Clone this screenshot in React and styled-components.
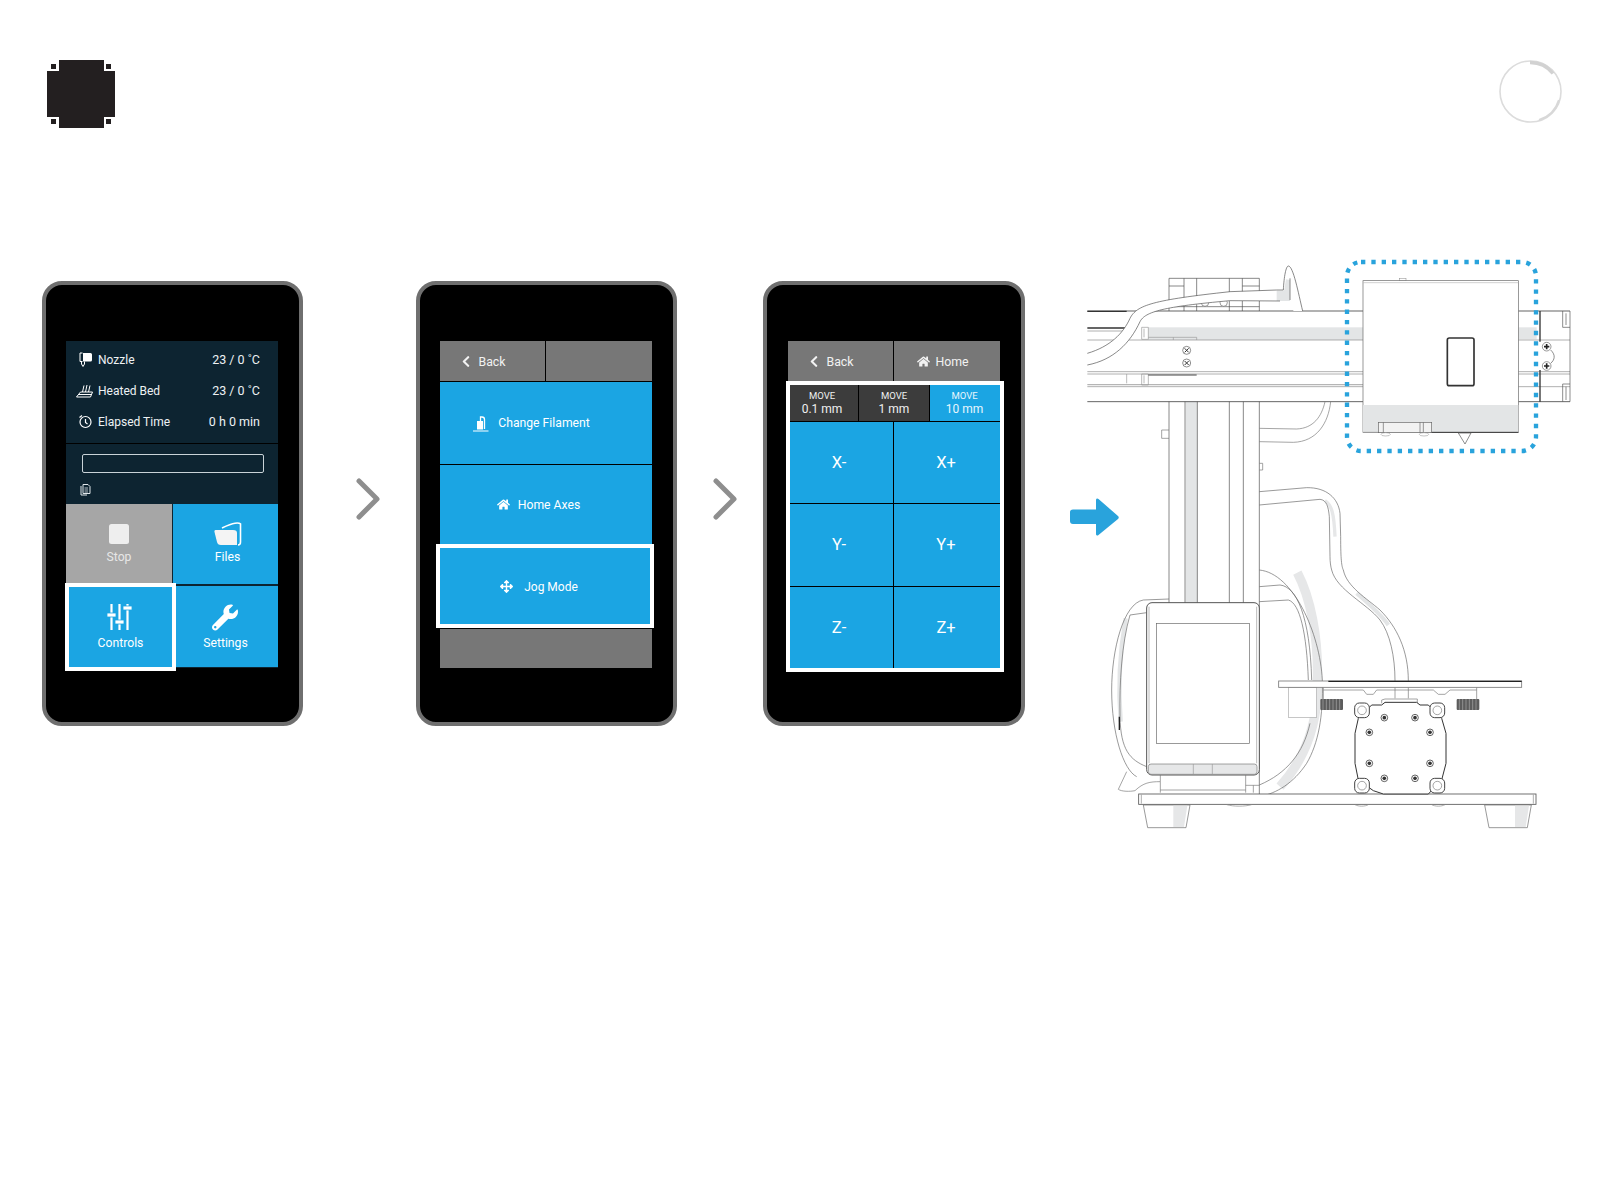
import styled, { createGlobalStyle } from "styled-components";
import { FaArrowsAlt, FaChevronLeft, FaHome, FaWrench } from "react-icons/fa";

const GlobalStyle = createGlobalStyle`
  body {
    margin: 0;
    background: #fff;
    font-family: Roboto, "Liberation Sans", sans-serif;
  }
`;

const Page = styled.div`
  width: 1616px;
  min-height: 1191px;
  box-sizing: border-box;
  padding: 60px 54px 0 42px;
`;

const TopBar = styled.header`
  display: flex;
  justify-content: space-between;
  align-items: flex-start;
  height: 69px;
  padding-left: 5px;
`;

const Stage = styled.main`
  display: flex;
  align-items: flex-start;
  margin-top: 121px;
`;

const Phone = styled.div`
  flex: none;
  width: ${(p) => p.$w ?? 261}px;
  height: 445px;
  margin-top: 31px;
  box-sizing: border-box;
  padding: 56px 0 0 ${(p) => p.$inset ?? 20}px;
  background: #000;
  border: 4px solid #6f6f6f;
  border-radius: 20px;
`;

const Screen = styled.div`
  display: flex;
  flex-direction: column;
  width: 212px;
  height: 327px;
  color: #fff;
`;

const Chevron = styled.svg`
  flex: none;
  width: 24px;
  height: 42px;
  margin: 228px ${(p) => p.$after}px 0 ${(p) => p.$before}px;
`;

const Arrow = styled.svg`
  flex: none;
  width: 49px;
  height: 38px;
  margin: 248px -39px 0 45px;
`;

const Drawing = styled.svg`
  flex: none;
  width: 500px;
  height: 590px;
`;

/* status screen */
const InfoPanel = styled.div`
  height: 102px;
  box-sizing: border-box;
  padding: 3px 18px 0 12px;
  background: #0d2431;
`;

const InfoRow = styled.div`
  display: flex;
  align-items: center;
  height: 31px;
  font-size: 12px;
  color: #eef2f4;
`;

const InfoIcon = styled.svg`
  flex: none;
  width: ${(p) => p.$w ?? 15}px;
  height: 15px;
  margin-left: ${(p) => p.$left ?? 0}px;
  margin-right: ${(p) => p.$gap ?? 4}px;
`;

const InfoValue = styled.span`
  margin-left: auto;
  font-size: 12.5px;
`;

const ProgressPanel = styled.div`
  height: 60px;
  margin-top: 1px;
  box-sizing: border-box;
  padding: 10px 14px 0 16px;
  background: #0d2431;
`;

const ProgressBar = styled.div`
  height: 19px;
  box-sizing: border-box;
  border: 1px solid #c9d3d8;
  border-radius: 2px;
`;

const FileIcon = styled.svg`
  display: block;
  width: 11px;
  height: 13px;
  margin: 10px 0 0 -2px;
`;

const TileGrid = styled.div`
  flex: 1;
  display: grid;
  grid-template-columns: 106px 105px;
  grid-template-rows: 80px 81px;
  column-gap: 1px;
  row-gap: 2px;
  background: #0d2431;
`;

const Tile = styled.div`
  display: flex;
  flex-direction: column;
  align-items: center;
  box-sizing: border-box;
  padding-top: ${(p) => p.$top}px;
  padding-left: ${(p) => p.$shift ?? 0}px;
  font-size: 12.2px;
  color: ${(p) => (p.$muted ? "#e6e6e6" : "#fff")};
  background: ${(p) => (p.$muted ? "#a6a6a6" : "#1ba5e3")};
`;

const SelectedTile = styled(Tile)`
  position: relative;
  margin: -3px -4px -4px -1px;
  border: 4px solid #fff;
`;

const TileIcon = styled.svg`
  display: block;
  width: ${(p) => p.$w}px;
  height: ${(p) => p.$h}px;
  margin-bottom: ${(p) => p.$gap}px;
  margin-right: ${(p) => p.$nudge ?? 0}px;
`;

const WrenchIcon = styled(FaWrench)`
  display: block;
  width: 26px;
  height: 27px;
  margin-bottom: 5px;
  margin-right: 1px;
`;

/* menu and jog screens */
const HeaderBar = styled.div`
  display: grid;
  grid-template-columns: 105px 106px;
  column-gap: 1px;
  height: 40px;
  flex: none;
`;

const HeaderCell = styled.div`
  display: flex;
  align-items: center;
  justify-content: center;
  gap: ${(p) => p.$gap ?? 8}px;
  padding: 1px ${(p) => p.$pad ?? 0}px 0 0;
  font-size: 12.3px;
  color: #f2f2f2;
  background: #777;
`;

const BackIcon = styled(FaChevronLeft)`
  width: 8px;
  height: 13px;
`;

const HomeIcon = styled(FaHome)`
  width: ${(p) => p.$size}px;
  height: ${(p) => p.$size}px;
`;

const MoveIcon = styled(FaArrowsAlt)`
  width: 13px;
  height: 13px;
  margin-right: 1px;
`;

const MenuButton = styled.div`
  display: flex;
  align-items: center;
  justify-content: center;
  gap: ${(p) => p.$gap ?? 8}px;
  flex: none;
  height: ${(p) => p.$h}px;
  margin-top: ${(p) => p.$top ?? 0}px;
  padding-right: ${(p) => p.$pad}px;
  font-size: 12.2px;
  background: #1ba5e3;
`;

const SelectedButton = styled(MenuButton)`
  box-sizing: border-box;
  height: 84px;
  margin: 0 -2px 0 -4px;
  padding: 1px 12px 0 0;
  gap: 10px;
  font-size: 12px;
  border: 4px solid #fff;
`;

const GrayFooter = styled.div`
  flex: 1;
  margin-top: 1px;
  background: #777;
`;

const JogPanel = styled.div`
  flex: none;
  margin: 0 -4px 0 -2px;
  height: 291px;
  box-sizing: border-box;
  padding: 4px;
  background: #fff;
`;

const JogInner = styled.div`
  display: flex;
  flex-direction: column;
  gap: 1px;
  height: 100%;
  background: #000;
`;

const StepRow = styled.div`
  display: grid;
  grid-template-columns: 68px 70px 70px;
  column-gap: 1px;
  flex: none;
  height: 36px;
`;

const StepCell = styled.div`
  display: flex;
  flex-direction: column;
  align-items: center;
  justify-content: center;
  padding: 0 ${(p) => p.$pad ?? 0}px 2px 0;
  font-size: 12px;
  line-height: 14px;
  color: ${(p) => (p.$active ? "#e8f6fd" : "#f0f0f0")};
  background: ${(p) => (p.$active ? "#1ba5e3" : "#3c3c3c")};

  small {
    font-size: 9.5px;
    line-height: 13px;
  }
`;

const AxisGrid = styled.div`
  flex: 1;
  display: grid;
  grid-template-columns: 103px 106px;
  grid-auto-rows: 1fr;
  gap: 1px;
`;

const AxisButton = styled.div`
  display: flex;
  align-items: center;
  justify-content: center;
  padding-right: 5px;
  font-size: 16.5px;
  background: #1ba5e3;

  &:nth-child(even) {
    padding-right: 2px;
  }
`;

/* pictures */
const Logo = () => (
  <svg width="68" height="68" viewBox="0 0 68 68">
    <path fill="#231f20" d="M12 0H57V11H68V57H57V68H12V57H0V11H12Z" />
    <path
      fill="#231f20"
      d="M4 4h5v5H4ZM59 4h5v5h-5ZM4 59h5v5H4ZM59 59h5v5h-5Z"
    />
  </svg>
);

const Ring = () => (
  <svg width="63" height="63" viewBox="0 0 63 63">
    <circle cx="31.5" cy="31.5" r="30.5" fill="none" stroke="#dcdcdc" strokeWidth="1.6" />
    <path d="M31 2.5A29 29 0 0 1 54 13.5" fill="none" stroke="#d2d2d2" strokeWidth="3.5" />
    <path d="M60 40A30 30 0 0 1 40 60" fill="none" stroke="#d8d8d8" strokeWidth="2.2" />
  </svg>
);

const NextChevron = ({ before, after }) => (
  <Chevron $before={before} $after={after} viewBox="0 0 24 42">
    <path d="M3 3L21 21L3 39" fill="none" stroke="#8e8e8e" strokeWidth="5" strokeLinecap="round" strokeLinejoin="round" />
  </Chevron>
);

const NozzleGlyph = () => (
  <InfoIcon viewBox="0 0 15 15" $gap={5}>
    <path d="M5 1h7.5A1.5 1.5 0 0 1 14 2.5v5.5A1.5 1.5 0 0 1 12.5 9.5H5Z" fill="#fff" />
    <path d="M4.5 1H2v8.5h2.5M3.5 9.5v2.5l1.5 2.5 1.5-2.5V9.5" fill="none" stroke="#fff" strokeWidth="1" />
  </InfoIcon>
);

const BedGlyph = () => (
  <InfoIcon viewBox="0 0 17 15" $w={17} $left={-2} $gap={5}>
    <path d="M4.5 9L0.5 14H14.5L16.5 9Z" fill="none" stroke="#fff" strokeWidth="1" />
    <path d="M6.5 9L8 2.5M9.5 9L11 2M12.5 9L14 2.5M3 11.5H15.5" fill="none" stroke="#fff" strokeWidth="1" />
  </InfoIcon>
);

const ClockGlyph = () => (
  <InfoIcon viewBox="0 0 15 15" $gap={5}>
    <circle cx="7.5" cy="8" r="5.5" fill="none" stroke="#fff" strokeWidth="1.2" />
    <path d="M7.5 5v3.5l2 1.5M1.5 3.5L4 1.5" fill="none" stroke="#fff" strokeWidth="1.2" />
  </InfoIcon>
);

const FilamentGlyph = () => (
  <svg width="16" height="17" viewBox="0 0 16 17">
    <path d="M4 6h6v8.5H4Z" fill="#fff" />
    <path d="M11.5 14V4.500a2.500 2.500 0 0 0-2.500-2.500H7.500V6" fill="none" stroke="#fff" strokeWidth="1.3" />
    <path d="M0 16H15.5" stroke="#fff" strokeWidth="1" />
  </svg>
);

const Ln = ({ d, w = 2, c = "#4d4d4d" }) => (
  <path d={d} fill="none" stroke={c} strokeWidth={w} />
);

const Screw = ({ x, y }) => (
  <g>
    <circle cx={x} cy={y} r="12" fill="#fff" stroke="#555" strokeWidth="2" />
    <path d={`M${x - 6} ${y - 6}L${x + 6} ${y + 6}M${x + 6} ${y - 6}L${x - 6} ${y + 6}`} stroke="#333" strokeWidth="3" />
  </g>
);

const MotorScrew = ({ x, y }) => (
  <g>
    <circle cx={x} cy={y} r="10" fill="#fff" stroke="#444" strokeWidth="2.5" />
    <circle cx={x} cy={y} r="5.5" fill="#333" />
  </g>
);

const Lug = ({ x, y }) => (
  <g>
    <rect x={x - 22} y={y - 22} width="44" height="44" rx="14" fill="#fff" stroke="#444" strokeWidth="3" />
    <circle cx={x} cy={y} r="13" fill="#fff" stroke="#777" strokeWidth="2" />
  </g>
);

const Knob = ({ x }) => (
  <g>
    <rect x={x} y="1347" width="68" height="33" rx="3" fill="#5c5c5c" />
    <path d={`M${x + 8} 1347v33M${x + 18} 1347v33M${x + 28} 1347v33M${x + 38} 1347v33M${x + 48} 1347v33M${x + 58} 1347v33`} stroke="#aaa" strokeWidth="2" />
  </g>
);

const Foot = ({ x, patch }) => (
  <g>
    <path d={`M${x} 1665H${x + 140}L${x + 128} 1733H${x + 13}Z`} fill="#fff" stroke="#666" strokeWidth="2" />
    <path d={`M${patch} 1667H${patch + 42}L${patch + 32} 1731H${patch}Z`} fill="#e6e7e8" />
  </g>
);

const PrinterDrawing = () => (
  <Drawing viewBox="0 0 1500 1770">
    {/* column */}
    <rect x="317" y="455" width="35" height="620" fill="#e3e5e6" />
    <Ln d="M267 455V1060M315 455V1060M352 455V1060M448 455V1060M490 455V1060M538 455V1640" />
    <Ln d="M267 540H245V565H267M538 640H548V660H538" c="#777" />

    {/* motor on top */}
    <Ln d="M267 183V85H538V183M312 85V183M350 85V183M448 85V183M487 85V183M487 108H538M267 108H312M267 170H538" />
    <circle cx="375" cy="158" r="11" fill="#fff" stroke="#666" strokeWidth="2" />
    <circle cx="431" cy="158" r="11" fill="#fff" stroke="#666" strokeWidth="2" />

    {/* x rail */}
    <rect x="205" y="232" width="644" height="38" fill="#e3e5e6" />
    <rect x="1315" y="232" width="55" height="36" fill="#e3e5e6" />
    <Ln d="M22 183H849M22 455H849M1315 183H1470M1315 455H1470" w="2.5" c="#444" />
    <Ln d="M22 184H140M22 234H135" w="4" c="#333" />
    <Ln d="M22 243H130M22 270H849M22 365H849M22 372H849M22 410H849M1315 270H1470M1315 365H1470M1315 372H1470M1315 410H1470" c="#8a8a8a" />
    <Ln d="M22 404H849" w="4" c="#b5b5b5" />
    <Ln d="M185 232H205V268H185ZM192 236V262M185 372H205V405H185ZM192 376V400M205 262H350V270M280 262V270M140 372V400" c="#999" />
    <Ln d="M205 375H350" w="3" c="#444" />
    <Screw x={320} y={301} />
    <Screw x={320} y={339} />

    {/* x rail end */}
    <Ln d="M1380 183V275M1380 360V455" w="4" c="#333" />
    <Ln d="M1448 183V232H1470M1448 402V455M1448 402H1470M1470 183V455M1458 190V225M1458 410V450" c="#555" />
    <Ln d="M1412 300C1428 315 1424 330 1412 340" c="#555" />
    <circle cx="1400" cy="290" r="13" fill="#fff" stroke="#666" strokeWidth="2" />
    <circle cx="1400" cy="348" r="13" fill="#fff" stroke="#666" strokeWidth="2" />
    <path d="M1392 290H1408M1400 282V298M1392 348H1408M1400 340V356" stroke="#222" strokeWidth="5" />

    {/* top cable */}
    <path d="M22 310C90 290 130 250 150 205C170 165 220 150 450 125L590 120L610 120C612 80 618 48 625 48C640 48 655 130 668 183H640V154L600 153H450C250 170 195 185 180 215C150 280 100 330 22 345Z" fill="#fff" />
    <path d="M590 122H612L618 88L630 90V153H590Z" fill="#e3e5e6" />
    <Ln d="M22 345C100 330 150 280 180 215C195 185 250 170 450 152L600 153" />
    <Ln d="M22 310C90 290 130 250 150 205C170 165 220 150 450 125L590 120H610C612 80 618 48 625 48C640 48 655 130 668 183M630 85V150" />

    {/* side cables */}
    <Ln d="M538 535L650 537C700 535 725 500 735 455M538 575L640 577C710 575 745 520 752 455" c="#777" />
    <Ln d="M735 752C755 765 762 790 765 860" w="10" c="#e6e7e8" />
    <Ln d="M830 1030C865 1060 900 1090 925 1125" w="12" c="#e3e5e6" />
    <Ln d="M538 725L680 713C740 712 775 745 780 790L782 860C782 930 785 950 790 960C800 1010 860 1045 900 1080C950 1130 985 1200 985 1293" c="#666" />
    <Ln d="M538 765L720 748C740 750 745 770 748 800L750 920C750 935 752 950 755 960C770 1020 860 1060 900 1110C930 1150 945 1220 945 1293" c="#666" />

    {/* big loop behind the screen */}
    <Ln d="M652 968C690 1040 716 1160 712 1290C715 1400 690 1510 600 1610" w="28" c="#e6e7e8" />
    <Ln d="M538 960C640 970 720 1150 727 1290C730 1400 715 1480 680 1540C640 1600 590 1630 538 1640" c="#666" />
    <Ln d="M538 1010L600 1005C650 1010 690 1100 695 1290M538 1055L625 1050C660 1060 680 1150 685 1290M690 1420C670 1510 620 1570 538 1605" c="#666" />
    <Ln d="M137 1105C120 1200 113 1300 122 1415" w="13" c="#e3e5e6" />
    <Ln d="M267 1047L190 1050C130 1060 95 1200 95 1320C95 1450 130 1560 170 1580M200 1088L150 1095C125 1180 118 1300 120 1400C122 1500 150 1530 200 1550" c="#666" />
    <Ln d="M118 1400V1440" w="4" c="#222" />
    <Ln d="M140 1565L115 1618C125 1625 150 1625 165 1622C190 1598 210 1595 240 1595" c="#777" />

    {/* screen housing */}
    <rect x="200" y="1058" width="338" height="517" rx="16" fill="#fff" stroke="#555" strokeWidth="3" />
    <rect x="229" y="1120" width="279" height="360" fill="#fff" stroke="#666" strokeWidth="2" />
    <rect x="205" y="1542" width="326" height="31" rx="8" fill="#e6e7e8" stroke="#777" strokeWidth="2" />
    <Ln d="M340 1542V1573M397 1542V1573M207 1070V1540M530 1070V1540" c="#999" />
    <Ln d="M241 1575V1628M497 1575V1628M241 1620H497M497 1606H538M520 1606V1628" c="#777" />

    {/* base */}
    <Foot x={190} patch={280} />
    <Foot x={1214} patch={1305} />
    <rect x="176" y="1632" width="1192" height="31" fill="#fff" stroke="#555" strokeWidth="2.5" />
    <Ln d="M184 1634V1661M1360 1634V1661M440 1664C460 1670 495 1670 515 1664M825 1664C835 1670 855 1670 865 1664M1055 1664C1065 1670 1085 1670 1095 1664" c="#888" />

    {/* bed */}
    <rect x="625" y="1312" width="85" height="90" fill="#fff" stroke="#aaa" strokeWidth="2" />
    <Ln d="M730 1312V1347M1190 1312V1347M730 1320H850L860 1333H880L890 1320H1060L1075 1333H1095L1110 1320H1190" c="#777" />
    <Ln d="M905 1360V1350L915 1347H1012V1365M945 1312V1345M985 1312V1345" c="#777" />
    <rect x="596" y="1293" width="729" height="19" fill="#fff" stroke="#777" strokeWidth="2.5" />
    <Ln d="M745 1294H1325" w="3.5" c="#222" />
    <Knob x={721} />
    <Knob x={1130} />

    {/* z motor */}
    <path d="M875 1365H905L915 1357H1010L1020 1365H1045L1085 1405L1098 1450V1540L1085 1590L1045 1632H910L880 1622L835 1590L825 1540V1450L835 1405Z" fill="#fff" stroke="#333" strokeWidth="3" />
    <Lug x={846} y={1381} />
    <Lug x={1072} y={1381} />
    <Lug x={846} y={1607} />
    <Lug x={1072} y={1607} />
    <MotorScrew x={913} y={1403} />
    <MotorScrew x={1005} y={1403} />
    <MotorScrew x={868} y={1447} />
    <MotorScrew x={1050} y={1447} />
    <MotorScrew x={868} y={1540} />
    <MotorScrew x={1050} y={1540} />
    <MotorScrew x={913} y={1585} />
    <MotorScrew x={1005} y={1585} />

    {/* carriage */}
    <rect x="958" y="85" width="20" height="8" fill="#fff" stroke="#888" strokeWidth="1.5" />
    <rect x="849" y="92" width="466" height="455" fill="#fff" stroke="#666" strokeWidth="2" />
    <Ln d="M849 98H1315" c="#bbb" />
    <rect x="849" y="465" width="466" height="82" fill="#e3e5e6" />
    <Ln d="M849 547H1050" c="#888" />
    <Ln d="M1050 547H1315" w="3" c="#333" />
    <path d="M1135 549H1173L1155 582Z" fill="#fff" stroke="#555" strokeWidth="2" />
    <rect x="895" y="517" width="160" height="31" fill="#f2f2f2" stroke="#666" strokeWidth="2" />
    <Ln d="M910 517V548M1020 517V548M1030 517V548" c="#666" />
    <ellipse cx="917" cy="553" rx="14" ry="5" fill="#fff" stroke="#888" strokeWidth="1.5" />
    <ellipse cx="1032" cy="553" rx="14" ry="5" fill="#fff" stroke="#888" strokeWidth="1.5" />
    <rect x="1102" y="264" width="80" height="143" rx="6" fill="#fff" stroke="#333" strokeWidth="5" />

    {/* callout */}
    <rect x="801" y="36" width="567" height="567" rx="42" fill="none" stroke="#29a3dc" strokeWidth="13" strokeDasharray="13 18" />
  </Drawing>
);

export default function App() {
  return (
    <Page>
      <GlobalStyle />
      <TopBar>
        <Logo />
        <Ring />
      </TopBar>

      <Stage>
        <Phone>
          <Screen>
            <InfoPanel>
              <InfoRow>
                <NozzleGlyph />
                Nozzle
                <InfoValue>23 / 0 ˚C</InfoValue>
              </InfoRow>
              <InfoRow>
                <BedGlyph />
                Heated Bed
                <InfoValue>23 / 0 ˚C</InfoValue>
              </InfoRow>
              <InfoRow>
                <ClockGlyph />
                Elapsed Time
                <InfoValue>0 h 0 min</InfoValue>
              </InfoRow>
            </InfoPanel>
            <ProgressPanel>
              <ProgressBar />
              <FileIcon viewBox="0 0 11 13">
                <path d="M3 1.5h5l2 2v7H3ZM1 3v9h6" fill="none" stroke="#dfe6ea" strokeWidth="1" />
                <path d="M4.5 5H8M4.5 7H8M4.5 9H8" stroke="#dfe6ea" strokeWidth="0.8" />
              </FileIcon>
            </ProgressPanel>
            <TileGrid>
              <Tile $muted $top={20}>
                <TileIcon $w={20} $h={20} $gap={6} viewBox="0 0 20 20">
                  <rect width="20" height="20" rx="2.5" fill="#eee" />
                </TileIcon>
                Stop
              </Tile>
              <Tile $top={18} $shift={4}>
                <TileIcon $w={28} $h={24} $gap={4} viewBox="0 0 28 24">
                  <path d="M8 6C12 4 18 1.5 21 1.2C23 1 25.5 1 26.500 1.8V20C26.500 22 25.500 23 24 23" fill="none" stroke="#fff" strokeWidth="1.6" />
                  <path d="M1.5 8H19C22 8 23 9 23 11V23H7C4.5 23 3.5 22 3 20L0.5 10C0.2 9 0.5 8 1.5 8Z" fill="#f4f4f4" />
                </TileIcon>
                Files
              </Tile>
              <SelectedTile $top={16}>
                <TileIcon $w={25} $h={27} $gap={6} $nudge={2} viewBox="0 0 25 27">
                  <path d="M4.5 1v26M12.5 1v26M20.5 1v26" stroke="#fff" strokeWidth="2.2" />
                  <path d="M0 10h9v4H0ZM8 17h9v4H8ZM16 3h9v4h-9Z" fill="#fff" stroke="#1ba5e3" strokeWidth="0.8" />
                </TileIcon>
                Controls
              </SelectedTile>
              <Tile $top={18}>
                <WrenchIcon />
                Settings
              </Tile>
            </TileGrid>
          </Screen>
        </Phone>

        <NextChevron before={53} after={36} />

        <Phone>
          <Screen>
            <HeaderBar>
              <HeaderCell $pad={17}>
                <BackIcon />
                Back
              </HeaderCell>
              <HeaderCell />
            </HeaderBar>
            <MenuButton $h={82} $top={1} $pad={29} $gap={9}>
              <FilamentGlyph />
              Change Filament
            </MenuButton>
            <MenuButton $h={79} $top={1} $pad={15}>
              <HomeIcon $size={13} />
              Home Axes
            </MenuButton>
            <SelectedButton>
              <MoveIcon />
              Jog Mode
            </SelectedButton>
            <GrayFooter />
          </Screen>
        </Phone>

        <NextChevron before={36} after={26} />

        <Phone $w={262} $inset={21}>
          <Screen>
            <HeaderBar>
              <HeaderCell $pad={17}>
                <BackIcon />
                Back
              </HeaderCell>
              <HeaderCell $pad={8} $gap={5}>
                <HomeIcon $size={13} />
                Home
              </HeaderCell>
            </HeaderBar>
            <JogPanel>
              <JogInner>
                <StepRow>
                  <StepCell $pad={4}>
                    <small>MOVE</small>
                    0.1 mm
                  </StepCell>
                  <StepCell>
                    <small>MOVE</small>
                    1 mm
                  </StepCell>
                  <StepCell $active $pad={1}>
                    <small>MOVE</small>
                    10 mm
                  </StepCell>
                </StepRow>
                <AxisGrid>
                  {["X-", "X+", "Y-", "Y+", "Z-", "Z+"].map((label) => (
                    <AxisButton key={label}>{label}</AxisButton>
                  ))}
                </AxisGrid>
              </JogInner>
            </JogPanel>
          </Screen>
        </Phone>

        <Arrow viewBox="0 0 49 38">
          <path
            d="M3 11.5H26V2C26 .5 27.5 0 28.5 1L48 18C49 19 49 20 48 21L28.5 37C27.5 38 26 37.5 26 36V26H3C1 26 0 25 0 23V14C0 12.5 1 11.5 3 11.5Z"
            fill="#29a3dc"
          />
        </Arrow>

        <PrinterDrawing />
      </Stage>
    </Page>
  );
}
